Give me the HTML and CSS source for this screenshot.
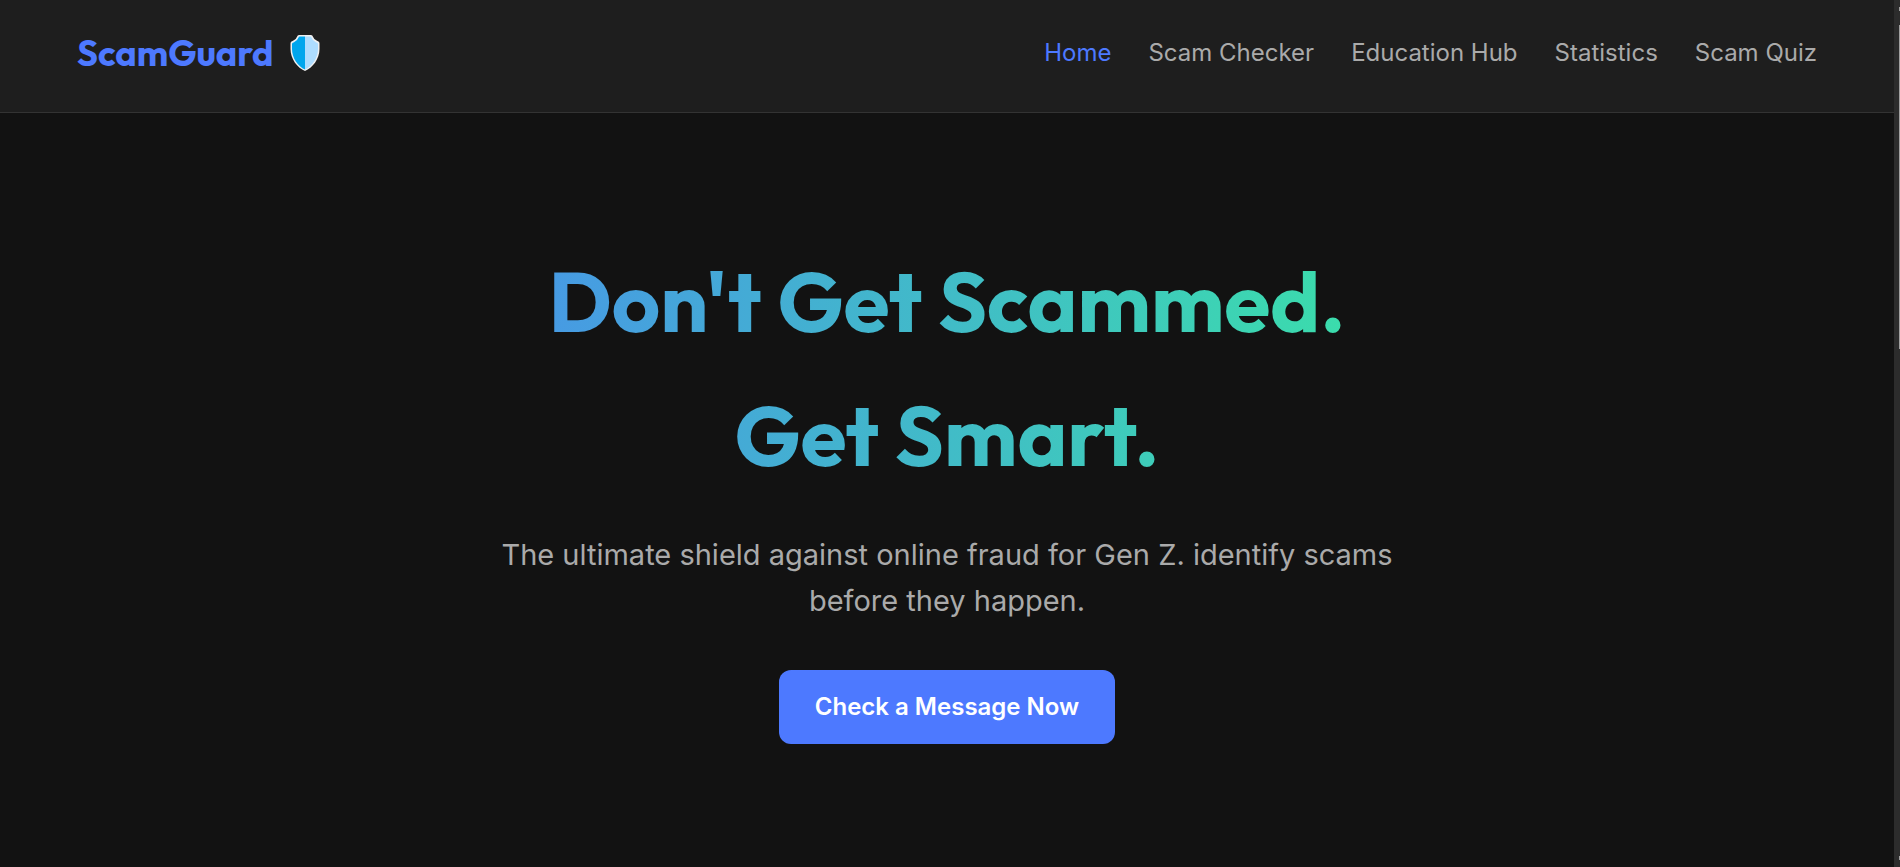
FILE: index.html
```html
<!DOCTYPE html>
<html lang="en">
<head>
    <meta charset="UTF-8">
    <meta name="viewport" content="width=device-width, initial-scale=1.0">
    <title>ScamGuard</title>
    <link rel="stylesheet" href="styles.css">
</head>
<body>
    <header class="navbar">
        <a href="#" class="logo">
            ScamGuard
            <svg class="logo-icon" viewBox="0 0 30 36" aria-hidden="true">
                <path d="M9 0H21Q22.500 0 23 1.700Q24 4.800 27 5.800L28.500 6.500Q29.500 7 29.500 8.500V14C29.500 24 22.500 33 15 36C7.500 33 0.500 24 0.500 14V8.500Q0.500 7 1.500 6.500L3 5.800Q6 4.800 7 1.700Q7.500 0 9 0Z" fill="#f0f0f0"/>
                <path d="M15 1.600H9.500Q8.800 1.600 8.500 2.500Q7.300 6 4 7.200L2.500 7.900Q2 8.200 2 9V14C2 23 8 31.500 15 34.500Z" fill="#00a6ed"/>
                <path d="M15 1.600H20.500Q21.200 1.600 21.500 2.500Q22.700 6 26 7.200L27.500 7.900Q28 8.200 28 9V14C28 23 22 31.500 15 34.500Z" fill="#aeddff"/>
            </svg>
        </a>
        <nav>
            <ul class="nav-links">
                <li><a href="#" class="active">Home</a></li>
                <li><a href="#">Scam Checker</a></li>
                <li><a href="#">Education Hub</a></li>
                <li><a href="#">Statistics</a></li>
                <li><a href="#">Scam Quiz</a></li>
            </ul>
        </nav>
    </header>

    <main class="hero">
        <h1>Don't Get Scammed.<br>Get Smart.</h1>
        <p>The ultimate shield against online fraud for Gen Z. identify scams before they happen.</p>
        <button type="button" class="btn">Check a Message Now</button>
    </main>

    <div class="scrollbar">
        <span class="scroll-arrow"></span>
        <span class="scroll-thumb"></span>
        <span class="scroll-arrow"></span>
    </div>
</body>
</html>
```
FILE: styles.css
```css
* {
    margin: 0;
    padding: 0;
    box-sizing: border-box;
}

body {
    background-color: #121212;
    color: #e0e0e0;
    font-family: Inter, "Liberation Sans", sans-serif;
    font-size: 24px;
    line-height: 38px;
    padding-right: 6px;
}

.navbar {
    display: flex;
    justify-content: space-between;
    align-items: center;
    background-color: #1e1e1e;
    border-bottom: 1px solid #333;
    padding: 24px 77px 30px;
}

.logo {
    display: flex;
    align-items: center;
    gap: 16px;
    color: #4d79ff;
    font-family: Outfit, Lato, sans-serif;
    font-size: 36px;
    font-weight: 700;
    line-height: 58px;
    text-decoration: none;
}

.logo-icon {
    width: 30px;
    height: 36px;
}

.nav-links {
    display: flex;
    gap: 37px;
    list-style: none;
}

.nav-links a {
    color: #aaa;
    text-decoration: none;
}

.nav-links a:hover,
.nav-links .active {
    color: #4d79ff;
}

.hero {
    max-width: 1800px;
    margin: 0 auto;
    padding: 121px 96px;
    text-align: center;
}

.hero h1 {
    font-family: Outfit, Lato, sans-serif;
    font-size: 84px;
    font-weight: 700;
    line-height: 134px;
    margin-bottom: 30px;
    background: linear-gradient(90deg, #4d79ff, #35fe90);
    -webkit-background-clip: text;
    background-clip: text;
    color: transparent;
}

.hero p {
    max-width: 900px;
    margin: 0 auto 46px;
    color: #aaa;
    font-size: 29px;
    line-height: 46px;
}

.btn {
    background-color: #4d79ff;
    color: #fff;
    border: none;
    border-radius: 12px;
    padding: 18px 36px;
    font-family: inherit;
    font-size: 24px;
    font-weight: 600;
    line-height: 38px;
    cursor: pointer;
}

.btn:hover {
    background-color: #3a63e0;
}

/* scroll track along the window edge */
.scrollbar {
    position: fixed;
    top: 0;
    right: 0;
    bottom: 0;
    width: 6px;
    display: flex;
    flex-direction: column;
    align-items: flex-end;
    gap: 14px;
    padding: 7px 0;
    background-color: #2c2c2c;
}

.scroll-arrow {
    width: 1px;
    height: 4px;
    background-color: #9f9f9f;
}

.scroll-thumb {
    width: 1px;
    height: 38%;
    margin-bottom: auto;
    background-color: #9f9f9f;
}
```
